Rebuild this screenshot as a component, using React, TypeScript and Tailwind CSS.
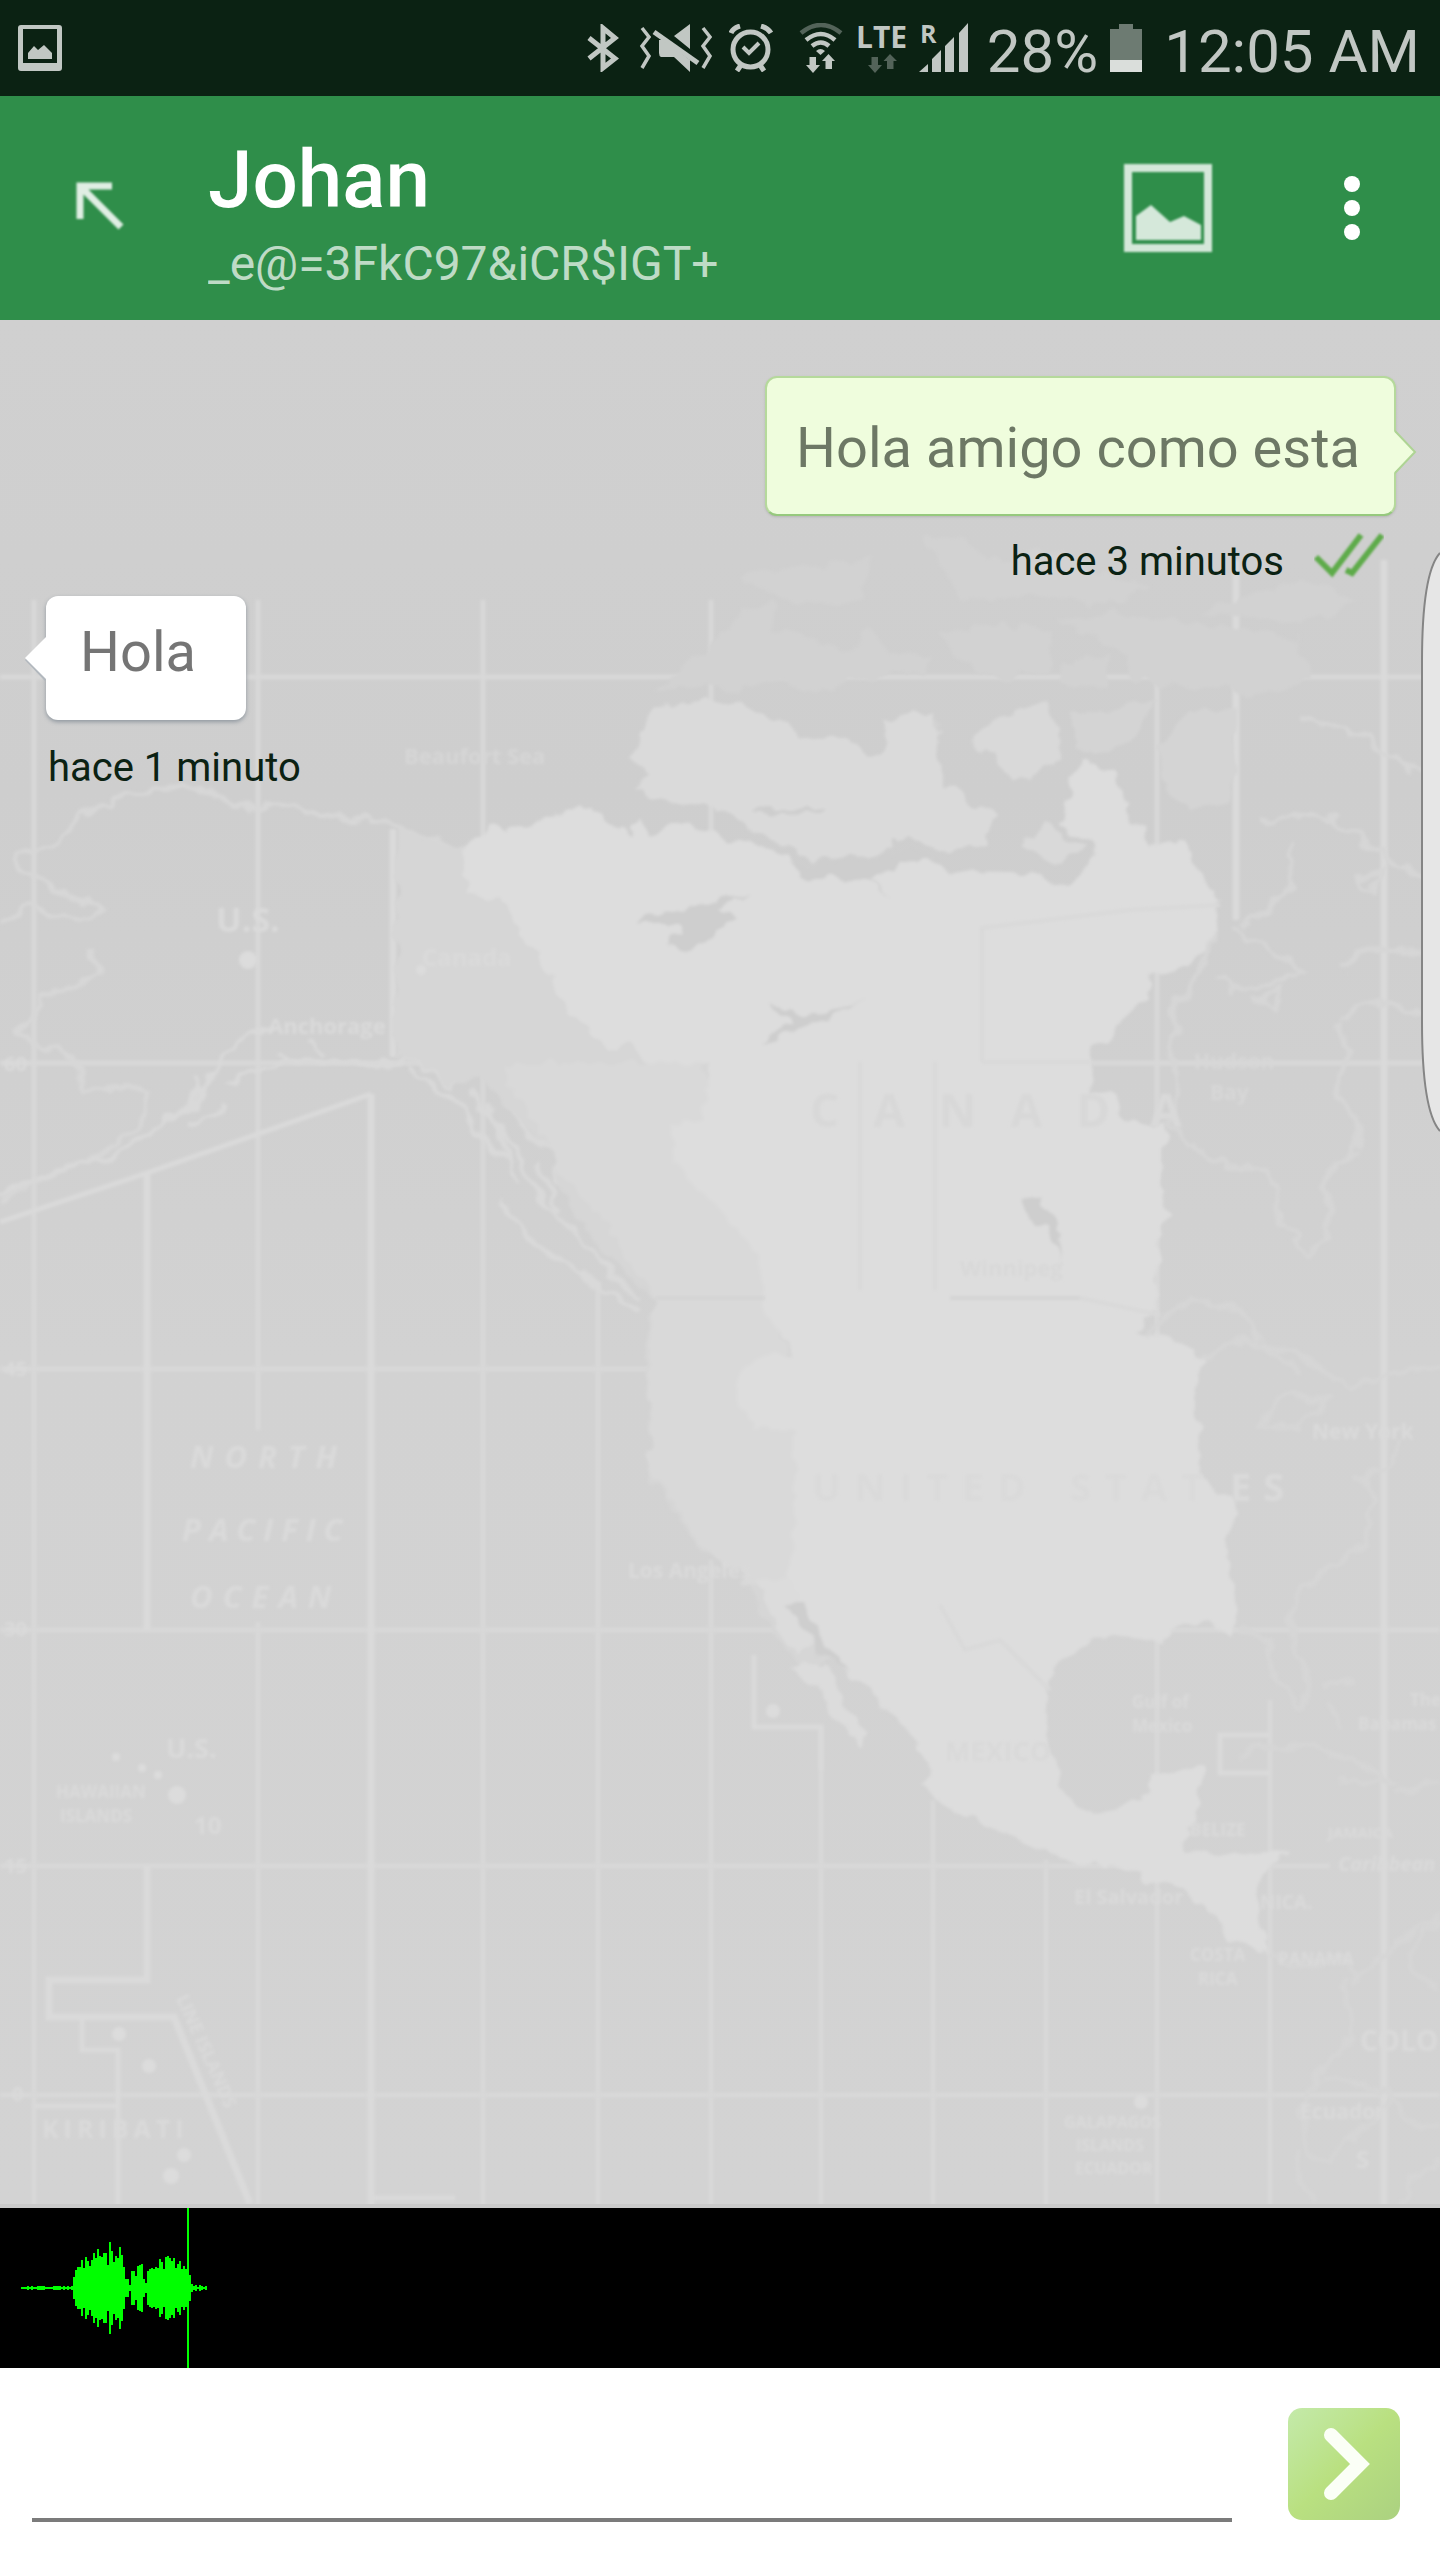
import React from 'react';

const WAVE = [
  1, 1, 1, 2, 1, 2, 1, 1, 2, 2, 2, 2, 1, 1, 1, 1, 2, 2, 2, 2, 1, 2, 1, 2, 1, 2, 11, 18, 21, 21, 28, 20, 31, 27, 22,
  28, 35, 30, 39, 32, 31, 35, 35, 23, 46, 37, 26, 32, 30, 41, 33, 21, 9, 9, 3, 17, 17, 12, 22, 23, 24, 9, 5, 17, 19,
  20, 19, 21, 20, 29, 26, 19, 31, 32, 30, 27, 30, 20, 24, 27, 19, 22, 19, 19, 13, 4, 2, 3, 1, 3, 2, 1, 2,
];

type Label = { x: number; y: number; size: number; text: string; space?: number; italic?: boolean; fill?: string; rotate?: number };

const LABELS: Label[] = [
  { x: 190, y: 1468, size: 31, text: 'NORTH', space: 11, italic: true },
  { x: 182, y: 1541, size: 31, text: 'PACIFIC', space: 8, italic: true },
  { x: 190, y: 1608, size: 31, text: 'OCEAN', space: 10, italic: true },
  { x: 216, y: 932, size: 34, text: 'U.S.' },
  { x: 422, y: 966, size: 24, text: 'Canada' },
  { x: 268, y: 1034, size: 22, text: 'Anchorage' },
  { x: 404, y: 764, size: 22, text: 'Beaufort Sea', fill: '#d6d6d6' },
  { x: 166, y: 1758, size: 27, text: 'U.S.' },
  { x: 56, y: 1798, size: 17, text: 'HAWAIIAN' },
  { x: 60, y: 1822, size: 17, text: 'ISLANDS' },
  { x: 194, y: 1834, size: 24, text: '10' },
  { x: 42, y: 2138, size: 25, text: 'KIRIBATI', space: 5 },
  { x: 176, y: 1998, size: 18, text: 'LINE ISLANDS', rotate: 66 },
  { x: 810, y: 1127, size: 46, text: 'CANAD', space: 34, fill: '#d8d8d8' },
  { x: 1150, y: 1127, size: 46, text: 'A', fill: '#d9d9d9' },
  { x: 812, y: 1501, size: 38, text: 'UNITED', space: 14, fill: '#dadada' },
  { x: 1070, y: 1501, size: 38, text: 'STAT', space: 14, fill: '#dadada' },
  { x: 1230, y: 1501, size: 38, text: 'ES', space: 12 },
  { x: 628, y: 1578, size: 21, text: 'Los Angeles' },
  { x: 1194, y: 1069, size: 21, text: 'Hudson', fill: '#d7d7d7' },
  { x: 1210, y: 1100, size: 21, text: 'Bay', fill: '#d7d7d7' },
  { x: 960, y: 1276, size: 22, text: 'Winnipeg', fill: '#d8d8d8' },
  { x: 1312, y: 1439, size: 21, text: 'New York' },
  { x: 1132, y: 1708, size: 17, text: 'Gulf of' },
  { x: 1132, y: 1732, size: 17, text: 'Mexico' },
  { x: 945, y: 1761, size: 27, text: 'MEXICO', fill: '#d9d9d9' },
  { x: 1410, y: 1706, size: 17, text: 'The' },
  { x: 1358, y: 1730, size: 17, text: 'Bahamas' },
  { x: 1190, y: 1836, size: 17, text: 'BELIZE' },
  { x: 1338, y: 1871, size: 20, text: 'Caribbean', italic: true },
  { x: 1074, y: 1904, size: 20, text: 'El Salvador' },
  { x: 1260, y: 1909, size: 19, text: 'NICA.' },
  { x: 1190, y: 1961, size: 17, text: 'COSTA' },
  { x: 1198, y: 1985, size: 17, text: 'RICA' },
  { x: 1278, y: 1965, size: 17, text: 'PANAMA' },
  { x: 1328, y: 1838, size: 15, text: 'JAMAICA' },
  { x: 1360, y: 2051, size: 28, text: 'COLO' },
  { x: 1300, y: 2119, size: 21, text: 'Ecuador' },
  { x: 1064, y: 2128, size: 16, text: 'GALAPAGOS' },
  { x: 1076, y: 2151, size: 16, text: 'ISLANDS' },
  { x: 1075, y: 2174, size: 16, text: 'ECUADOR' },
  { x: 1356, y: 2168, size: 24, text: 'S' },
  { x: 4, y: 1071, size: 20, text: '60' },
  { x: 4, y: 1376, size: 20, text: '45' },
  { x: 4, y: 1636, size: 20, text: '30' },
  { x: 4, y: 1873, size: 20, text: '15' },
  { x: 12, y: 2101, size: 20, text: '0' },
];

function MapBackdrop() {
  return (
    <svg className="absolute inset-0 h-full w-full" viewBox="0 320 1440 1888" preserveAspectRatio="xMidYMin slice" aria-hidden="true">
      <defs>
        <linearGradient id="sea" x1="0" y1="0" x2="0" y2="1">
          <stop offset="0" stopColor="#d0d0d0" />
          <stop offset="0.25" stopColor="#cecece" />
          <stop offset="0.55" stopColor="#d2d2d2" />
          <stop offset="1" stopColor="#d3d3d3" />
        </linearGradient>
        <filter id="soft" x="-5%" y="-5%" width="110%" height="110%">
          <feGaussianBlur stdDeviation="1.6" />
        </filter>
        <filter id="coast" x="-5%" y="-5%" width="110%" height="110%">
          <feTurbulence type="fractalNoise" baseFrequency="0.05" numOctaves="2" seed="4" result="noise" />
          <feDisplacementMap in="SourceGraphic" in2="noise" scale="20" xChannelSelector="R" yChannelSelector="G" />
          <feGaussianBlur stdDeviation="1.4" />
        </filter>
      </defs>
      <rect x="0" y="320" width="1440" height="1888" fill="url(#sea)" />
      <g filter="url(#soft)">
        {/* graticule */}
        <path
          fill="none"
          stroke="#d8d8d8"
          strokeWidth="5"
          d="M34 600V2208M258 600V1430M258 1622V2208M483 600V2208M711 600V840M821 1725V2208M933 1800V2208M1046 1860V2208M1157 650V2208M1270 1700V2208M598 1283V2208M711 1560V2208M0 677H1440M0 1063H640M1092 1063H1440M0 1369H650M0 1630H820M1170 1630H1440M0 1866H1330M0 2095H1440"
        />
        <path
          fill="none"
          stroke="#dadada"
          strokeWidth="7"
          d="M147 1173V1630M147 1866V1980H49V2017H174L250 2204M371 1094V2208M393 829V1057M1384 560V2208M1236 560V920"
        />
        <path fill="none" stroke="#dadada" strokeWidth="5" d="M82 2017V2050H118V2208M34 2106H118M754 1655V1727H821V1770M1270 1735H1220V1773H1270M371 1094L147 1173L0 1222M371 2198H455" />
      </g>
      <g filter="url(#coast)">
        {/* alaska and the aleutians */}
        <path
          fill="none"
          stroke="#d7d7d7"
          strokeWidth="5"
          d="M461 850L425 836L393 829L370 818L330 817L280 806L235 806L210 790L165 788L120 794L110 806L80 812L60 842L36 850L14 855L15 868L40 876L55 892L80 900L104 910L80 920L50 912L30 908L0 925M90 952L98 970L70 990L40 995L36 1012L20 1030L30 1045L52 1050L75 1056L84 1090L120 1086L150 1090L145 1118L100 1155L60 1170L30 1184L0 1204"
        />
        <path
          fill="none"
          stroke="#d9d9d9"
          strokeWidth="5"
          d="M0 1196L50 1172L110 1158L150 1130L200 1100L215 1068L240 1040L275 1026M195 1078L200 1092L180 1112M230 1082L260 1066L300 1062L345 1063L393 1062L420 1062L450 1086L478 1070L498 1090L530 1135L560 1158L555 1188M190 1130L225 1104M282 1050L290 1066M310 1044L325 1056M410 1070L460 1105L480 1135L510 1165M500 1200L530 1240L575 1270L640 1312M470 1090L500 1130L525 1165L540 1200L570 1230L600 1260L640 1300M490 1105L515 1185M535 1160L560 1215"
        />
        {/* western slopes */}
        <path
          fill="#d6d6d6"
          d="M461 850L396 830V1057L420 1060L450 1085L480 1075L530 1130L560 1160L556 1190L600 1250L655 1300L645 1350L644 1400L652 1478L700 1550L745 1575L770 1630L800 1665L860 1660L820 1400L760 1200L700 1050L560 920Z"
        />
        <path
          fill="#d9d9d9"
          d="M500 1063H700L760 1250L820 1500L800 1600L748 1583L700 1545L652 1470L645 1400L655 1300L610 1230L560 1170Z"
        />
        {/* the continent */}
        <path
          fill="#dddddd"
          d="M461 850L472 838L498 828L510 832L530 822L565 815L585 805L592 804L605 820L628 838L640 818L655 832L690 822L720 835L780 850L803 873L876 873L904 856L950 870L1032 873L1069 885L1101 850L1062 825L1065 795L1083 758L1110 770L1133 816L1152 844L1179 839L1197 873L1220 902L1216 936L1184 971L1156 974L1147 999L1115 1028L1092 1057L1091 1091L1115 1094L1124 1123L1170 1126L1161 1154V1195L1174 1212L1156 1232L1163 1263L1152 1292L1161 1309L1133 1332L1193 1344L1202 1361L1193 1400L1198 1431L1200 1473L1239 1510L1227 1536L1236 1620L1232 1633L1207 1622L1170 1627L1161 1642L1115 1634L1087 1641L1051 1669L1046 1735L1064 1797L1096 1816L1142 1800L1154 1771L1207 1766L1195 1818L1179 1850L1285 1855L1262 1871L1255 1913L1269 1954L1225 1939L1218 1918L1188 1894L1147 1881L1119 1868L1060 1858L995 1829L936 1800L924 1784L929 1766L917 1740L871 1693L821 1651L803 1609L787 1588L796 1520V1431L752 1424L736 1405V1378L757 1358L791 1355L766 1304L757 1252L720 1208L689 1182L673 1155L670 1124L707 1121L705 1063H647L634 1048L606 1046L569 1012L551 976L519 932L500 898L468 896Z"
        />
        <path fill="#dcdcdc" d="M784 1667L819 1661L839 1693L867 1735L860 1745L830 1714L823 1688ZM757 1580H790L815 1640L800 1655L775 1625Z" />
        {/* arctic islands */}
        <path
          fill="#dadada"
          d="M640 740L650 710L690 700L740 703L780 720L800 738L850 738L872 756L885 742L885 718L935 712L940 730L936 760L945 785L995 815L985 845L940 850L905 838L870 855L810 858L760 835L730 815L650 795L632 790L650 770L630 760Z"
        />
        <path
          fill="#d9d9d9"
          d="M970 740L1000 715L1045 703L1060 730L1060 760L1030 783L1000 765ZM1020 845L1045 825L1085 850L1060 865Z"
        />
        <path
          fill="#d4d4d4"
          d="M1072 715L1160 700L1130 745L1090 755L1072 735ZM1160 745L1190 710L1235 712L1232 800L1190 810L1165 790Z"
        />
        <path
          fill="#d2d2d2"
          d="M650 690L700 650L740 615L775 600L770 630L800 632L850 655L870 625L885 650L930 655L925 675L850 680L810 695L780 680L730 690ZM740 580L800 565L870 560L860 600L800 605L770 590ZM940 630L1000 622L1050 630L1050 670L1000 680L960 660ZM1060 660L1110 658L1105 690L1060 685ZM1055 620L1110 612L1230 630L1300 640L1310 680L1250 695L1130 680L1120 650ZM925 540L960 535L990 560L1060 550L1090 575L1150 585L1120 605L1030 595L960 600ZM1200 610L1300 580L1360 600L1300 625Z"
        />
        {/* inlets and lakes */}
        <path
          fill="#cecece"
          d="M750 810L825 806L820 812L755 814ZM790 865L870 858L910 846L940 860L900 862L870 880L895 900L865 880L800 878ZM634 922L660 914L685 912L720 898L745 896L720 910L735 920L690 948L664 944L685 932L682 924L640 924ZM759 1042L790 1025L774 1004L805 1016L850 1006L870 998L850 1008L818 1022L795 1036ZM1022 1200L1040 1197L1057 1225L1063 1262L1050 1235L1034 1220ZM787 1606L808 1602L822 1640L850 1670L817 1655L805 1630Z"
        />
        {/* eastern coasts */}
        <path
          fill="none"
          stroke="#d6d6d6"
          strokeWidth="5"
          d="M1216 936L1175 1008L1174 1130L1228 1165L1270 1170L1280 1225L1310 1252L1330 1240L1325 1175L1360 1150L1355 1115L1332 1090L1348 1060L1340 1025M1230 925L1300 970L1270 985L1230 990L1220 975M1260 820L1320 815L1360 835L1400 870L1440 880M1290 840L1290 880L1270 910L1240 925M1300 720L1360 735L1400 760L1440 785M1355 880L1385 870L1370 895ZM1345 970C1370 925 1400 960 1440 950M1340 1020L1380 1000L1440 1020M1255 1000L1280 990L1275 1010ZM1145 1335L1190 1300L1240 1310L1260 1345L1300 1370M1200 1360L1240 1340L1290 1350L1350 1385L1440 1365M1260 1425L1280 1395L1330 1400L1300 1425ZM1400 1440L1390 1465L1360 1480L1375 1500L1360 1550L1300 1590L1287 1620L1310 1685L1300 1708L1275 1680L1268 1640L1240 1630M1240 1760L1260 1745L1310 1745L1360 1765L1390 1780L1345 1785L1340 1775M1330 1705L1340 1728M1325 1685L1350 1680M1395 1790L1440 1785M1269 1954L1300 1970L1345 1955L1355 1980L1400 1940L1440 1915M1345 1980L1350 2035L1320 2075L1300 2110L1310 2150L1325 2165L1350 2140L1385 2110L1390 2090L1325 2075M1385 2092L1420 2130L1440 2125M1440 1920C1400 1950 1405 1975 1440 1985M1295 2150L1300 2185L1315 2204M1402 2204C1410 2180 1425 2165 1440 2160"
        />
      </g>
      <g filter="url(#soft)">
        {/* provincial and state boundaries */}
        <path fill="none" stroke="#d9d9d9" strokeWidth="4" d="M982 1062V928L1130 910L1220 905M860 1062V1290M935 1062V1290M950 1298H1080L1160 1315M940 1605L965 1650L1000 1640L1050 1690M982 1062H1090" />
        <path stroke="#d3d3d3" strokeWidth="3" d="M655 1298H765M950 1298H1080" />
        <g fill="#dcdcdc">
          <circle cx="248" cy="960" r="9" />
          <circle cx="421" cy="970" r="5" />
          <circle cx="177" cy="1795" r="9" />
          <circle cx="116" cy="1757" r="4" />
          <circle cx="142" cy="1768" r="4" />
          <circle cx="158" cy="1775" r="4" />
          <circle cx="119" cy="2034" r="7" />
          <circle cx="149" cy="2066" r="7" />
          <circle cx="184" cy="2155" r="7" />
          <circle cx="171" cy="2176" r="8" />
          <circle cx="773" cy="1711" r="7" />
          <circle cx="1141" cy="2102" r="7" />
        </g>
        {LABELS.map((l) => (
          <text
            key={`${l.text}-${l.x}-${l.y}`}
            x={l.x}
            y={l.y}
            fontSize={l.size}
            fontFamily="'Open Sans', sans-serif"
            fontWeight="700"
            fontStyle={l.italic ? 'italic' : 'normal'}
            letterSpacing={l.space ?? 0}
            fill={l.fill ?? '#dadada'}
            transform={l.rotate ? `rotate(${l.rotate} ${l.x} ${l.y})` : undefined}
          >
            {l.text}
          </text>
        ))}
      </g>
    </svg>
  );
}

function StatusBar() {
  return (
    <div className="flex h-24 shrink-0 items-center justify-between bg-[#0b2213] pl-4 pr-5 text-[#c1c7c3]">
      <svg className="h-12 w-12" viewBox="16 25 48 48" fill="currentColor" role="img" aria-label="Picture saved">
        <path fillRule="evenodd" d="M21 26H59Q62 26 62 29V69Q62 72 59 72H21Q18 72 18 69V29Q18 26 21 26ZM23 30V64H57V30Z" />
        <path d="M28 60V54L34 47L38 51L44 46L52 54V60Z" />
      </svg>
      <div className="flex items-center">
        <svg className="mr-4 h-12 w-9" viewBox="585 25 36 48" fill="none" stroke="currentColor" strokeWidth="5" role="img" aria-label="Bluetooth">
          <path d="M587 39L613 59.500L601 69V29L613 39L587 59.500" strokeMiterlimit="10" />
        </svg>
        <svg className="mr-4 h-12 w-[74px]" viewBox="636 25 74 48" role="img" aria-label="Vibrate">
          <path d="M639 29L646 38L639 47L646 57L639 69M700 29L707 38L700 47L707 57L700 69" fill="none" stroke="currentColor" strokeWidth="3.500" />
          <path d="M687 25V50L671 37ZM656 41H661L687 61V73L671 58H658Q656 57 656 54Z" fill="currentColor" />
          <path d="M651 33L695 64" stroke="currentColor" strokeWidth="5" />
        </svg>
        <svg className="mr-[26px] h-12 w-11" viewBox="725 25 44 48" fill="none" stroke="currentColor" role="img" aria-label="Alarm">
          <circle cx="746.500" cy="50.500" r="17.500" strokeWidth="5" />
          <path d="M739 48L745 54L755 44" strokeWidth="4" />
          <path d="M727 34Q729 29 736 27M757 27Q764 29 767 34" strokeWidth="5" />
          <path d="M737 66L733 72M756 66L760 72" strokeWidth="5" />
        </svg>
        <svg className="mr-3.5 h-[50px] w-11" viewBox="796 24 44 50" fill="none" role="img" aria-label="Wi-Fi">
          <path d="M798 34Q818 18 838 34" stroke="#536359" strokeWidth="4.500" />
          <path d="M803 41Q818 29 832 41M809 47Q818 40 826 47" stroke="currentColor" strokeWidth="4.500" />
          <path d="M813 52Q817.500 48 822 52L817.500 56ZM806.500 58H813V66H817L810 74L803 66H806.500ZM822.500 70V62H819L825.500 55L832 62H829V70Z" fill="currentColor" />
        </svg>
        <svg className="mr-2.5 h-[50px] w-[52px] overflow-visible" viewBox="855 24 52 50" role="img" aria-label="LTE">
          <text x="854" y="49" fontSize="30" fontWeight="700" fontFamily="'Open Sans', sans-serif" fill="currentColor">
            LTE
          </text>
          <path d="M869.500 58H876V66H880L873 74L866 66H869.500ZM885 70V62H881.500L888 55L895 62H891.500V70Z" fill="#536359" />
        </svg>
        <svg className="mr-[18px] h-[50px] w-[50px] overflow-visible" viewBox="918 24 50 50" fill="currentColor" role="img" aria-label="Signal, roaming">
          <text x="919" y="44" fontSize="25" fontWeight="700" fontFamily="'Open Sans', sans-serif">
            R
          </text>
          <path d="M918 73L927 65V73ZM931 60L940 51V73H931ZM944 47L953 38V73H944ZM958 34L967 24V73H958Z" />
        </svg>
        <span className="mr-3 pt-2 text-[60px] leading-none">28%</span>
        <svg className="mr-[22px] h-12 w-8" viewBox="0 0 32 48" role="img" aria-label="Battery">
          <path d="M9 0H23V5H32V36H0V5H9Z" fill="#6d7b72" />
          <path d="M0 36H32V48H0Z" fill="#dadedb" />
        </svg>
        <span className="pt-2 text-[60px] leading-none">12:05 AM</span>
      </div>
    </div>
  );
}

function Header() {
  return (
    <header className="flex h-56 shrink-0 items-center bg-[#2f8e4a] pr-16 text-white">
      <button type="button" aria-label="Back" className="flex w-52 shrink-0 items-center pl-[72px]">
        <svg className="h-14 w-14" viewBox="72 181 56 56" fill="none" stroke="currentColor" strokeOpacity="0.85">
          <path className="blur-[1px]" d="M80 220V187H112M81 188L121 228" strokeWidth="7" />
        </svg>
      </button>
      <div className="min-w-0 flex-1 pt-5">
        <h1 className="text-[80px] font-medium leading-[88px]">Johan</h1>
        <p className="mt-1 truncate text-[48px] leading-[72px] text-white/70">_e@=3FkC97&amp;iCR$IGT+</p>
      </div>
      <button type="button" aria-label="Attach picture" className="mr-[114px]">
        <svg className="h-[92px] w-[92px]" viewBox="0 0 92 92" opacity="0.8">
          <rect x="6" y="6" width="80" height="80" fill="none" stroke="currentColor" strokeWidth="8" className="blur-[1px]" />
          <path className="blur-[1px]" d="M14 78V54L29 43L48 60L62 54L79 63V78Z" fill="currentColor" />
        </svg>
      </button>
      <button type="button" aria-label="More options" className="flex w-12 flex-col items-center gap-2">
        <span className="h-4 w-4 rounded-full bg-white" />
        <span className="h-4 w-4 rounded-full bg-white" />
        <span className="h-4 w-4 rounded-full bg-white" />
      </button>
    </header>
  );
}

function Conversation() {
  return (
    <main className="relative flex-1 overflow-hidden border-b-4 border-[#cacaca]">
      <MapBackdrop />
      <div className="relative flex flex-col gap-2.5 pt-14">
        <article className="flex flex-col items-end">
          <div className="relative mr-11 rounded-xl border-2 border-[#b5d99b] border-b-[#96c97d] bg-[#effddd] pb-[34px] pl-[29px] pr-[34px] pt-[38px] shadow-sm">
            <p className="text-[56px] leading-[64px] text-[#6d7865]">Hola amigo como esta</p>
            <svg className="absolute left-full top-[50px] h-12 w-6" viewBox="0 0 24 48" aria-hidden="true">
              <path d="M0 3L21 24L0 45Z" fill="#effddd" />
              <path d="M1 3L21 24L1 45" fill="none" stroke="#aed494" strokeWidth="2" />
            </svg>
          </div>
          <div className="mr-14 mt-4 flex items-start gap-[30px]">
            <time className="pt-1.5 text-[40px] leading-[48px] text-[#0b2213]">hace 3 minutos</time>
            <svg className="h-12 w-[70px]" viewBox="0 0 70 48" fill="none" stroke="#5eab4a" strokeWidth="6" role="img" aria-label="Read">
              <path className="blur-[1px]" d="M2 25L18 41L47 3M32 38L38 41L68 3" />
            </svg>
          </div>
        </article>
        <article className="flex flex-col items-start pl-[46px]">
          <div className="relative rounded-xl bg-white pb-9 pl-[34px] pr-[50px] pt-6 shadow-[0_2px_4px_#8f979f]">
            <p className="text-[56px] leading-[64px] text-[#757575]">Hola</p>
            <svg className="absolute right-full top-[39px] h-12 w-6" viewBox="0 0 24 48" aria-hidden="true">
              <path d="M24 45L4 24" stroke="#b2b8be" strokeWidth="3" />
              <path d="M24 2L3 23L24 44Z" fill="#ffffff" />
            </svg>
          </div>
          <time className="ml-0.5 mt-6 text-[40px] leading-[48px] text-[#0b2213]">hace 1 minuto</time>
        </article>
      </div>
      <svg className="absolute right-0 top-[232px] h-[580px] w-5" viewBox="0 0 20 580" aria-hidden="true">
        <path d="M20 1C8 14 2 52 2 110V470C2 528 8 566 20 579" fill="#e6e6e6" stroke="#858585" strokeWidth="2" />
      </svg>
    </main>
  );
}

function Waveform() {
  return (
    <div className="h-40 shrink-0 bg-black">
      <svg className="h-40 w-60" viewBox="0 0 240 160" fill="#00ff00" shapeRendering="crispEdges" role="img" aria-label="Voice recording">
        {WAVE.map((h, i) => (
          <rect key={i} x={21 + i * 2} y={80 - h} width="2" height={h * 2} />
        ))}
        <rect x="187" y="0" width="2" height="160" />
      </svg>
    </div>
  );
}

function Composer() {
  return (
    <form className="flex shrink-0 items-start bg-white pb-[38px] pl-8 pr-10 pt-10" onSubmit={(e) => e.preventDefault()}>
      <input
        type="text"
        aria-label="Message"
        className="mr-14 h-[114px] min-w-0 flex-1 border-b-4 border-[#7b7b7b] bg-transparent text-[56px] text-[#212121] outline-none"
      />
      <button
        type="submit"
        aria-label="Send"
        className="h-28 w-28 rounded-[14px] bg-linear-to-br from-[#c4eaaa] via-[#b9e080] to-[#abd180]"
      >
        <svg className="h-28 w-28" viewBox="0 0 112 112" fill="none" stroke="#fbfff6" strokeWidth="14" strokeLinecap="round" aria-hidden="true">
          <path d="M43 27L72 56L43 85" />
        </svg>
      </button>
    </form>
  );
}

export default function App() {
  return (
    <div className="flex min-h-screen flex-col bg-white font-['Roboto',sans-serif]">
      <StatusBar />
      <Header />
      <Conversation />
      <Waveform />
      <Composer />
    </div>
  );
}
